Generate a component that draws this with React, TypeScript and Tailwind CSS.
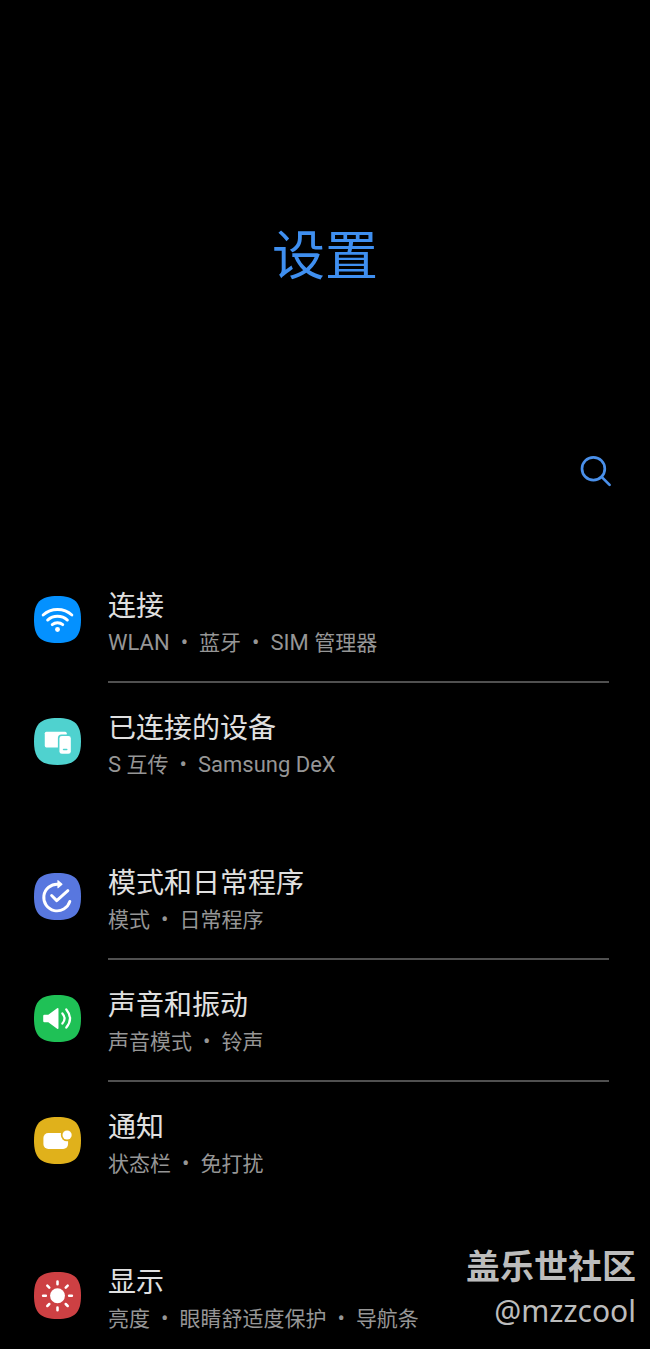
import React from 'react';

type SettingItem = {
   title: string;
   details: string[];
   color: string;
   icon: React.ReactNode;
};

const WifiIcon = (
   <>
      <g fill="none" stroke="#fff" strokeWidth="2.9" strokeLinecap="round">
         <path d="M9.3 19.4C17.4 11.9 30.6 11.9 38.7 19.4" />
         <path d="M13.9 24.6C19.6 19.4 28.4 19.4 34.1 24.6" />
         <path d="M18.6 29.3C21.6 26.7 26.4 26.7 29.4 29.3" />
      </g>
      <circle cx="24" cy="34.2" r="2.5" fill="#fff" />
   </>
);

const DevicesIcon = (
   <>
      <rect x="11" y="14" width="22.4" height="16" rx="1.6" fill="#fff" />
      <rect x="24.4" y="16.9" width="14.4" height="20.8" rx="3.6" fill="#4fd2cf" />
      <rect x="26" y="18.5" width="11.6" height="18" rx="2.4" fill="#fff" />
      <path d="M30.2 32.2h3.2" stroke="#4fd2cf" strokeWidth="1.6" strokeLinecap="round" />
   </>
);

const ModesIcon = (
   <>
      <g fill="none" stroke="#fff" strokeWidth="3" strokeLinecap="round" strokeLinejoin="round">
         <path d="M24.4 11.5A13.6 13.6 0 1 0 36.6 29" />
         <path d="M18 23L23.2 28.2L34.6 18" />
      </g>
      <path d="M23.900 7.900q0-1 .8-.5l4.200 3.500q.6.6 0 1.200l-4.200 3.400q-.8.5-.8-.5z" fill="#fff" />
   </>
);

const SoundIcon = (
   <>
      <path d="M10.6 20.2H14.6L23.6 13.6Q25 12.8 25 14.4V33.6Q25 35.2 23.6 34.4L14.6 27.8H10.6Q9.4 27.8 9.4 26.6V21.4Q9.4 20.2 10.6 20.2Z" fill="#fff" />
      <g fill="none" stroke="#fff" strokeWidth="2.3" strokeLinecap="round">
         <path d="M29 18.8Q33.4 24 29 29.2" />
         <path d="M33 14.8Q40.6 24 33 33.2" />
      </g>
   </>
);

const NotificationIcon = (
   <>
      <rect x="9.6" y="16.400" width="25.200" height="16.200" rx="5" fill="#fff" />
      <circle cx="33.800" cy="18.400" r="6.400" fill="#e0b11b" />
      <circle cx="33.800" cy="18.400" r="4.700" fill="#fff" />
   </>
);

const DisplayIcon = (
   <>
      <circle cx="24" cy="24.3" r="7.6" fill="#fff" />
      <path
         d="M24 9.6v2.8M24 36.2V39M9.3 24.3h2.8M35.9 24.3h2.8M13.6 13.9l2 2M32.4 32.7l2 2M13.6 34.7l2-2M32.4 15.9l2-2"
         stroke="#fff"
         strokeWidth="2.6"
         strokeLinecap="round"
      />
   </>
);

// 설정 그룹별 항목 목록
const groups: SettingItem[][] = [
   [
      { title: '连接', details: ['WLAN', '蓝牙', 'SIM 管理器'], color: '#0491ff', icon: WifiIcon },
      { title: '已连接的设备', details: ['S 互传', 'Samsung DeX'], color: '#4fd2cf', icon: DevicesIcon },
   ],
   [
      { title: '模式和日常程序', details: ['模式', '日常程序'], color: '#5877df', icon: ModesIcon },
      { title: '声音和振动', details: ['声音模式', '铃声'], color: '#1fc156', icon: SoundIcon },
      { title: '通知', details: ['状态栏', '免打扰'], color: '#e0b11b', icon: NotificationIcon },
   ],
   [{ title: '显示', details: ['亮度', '眼睛舒适度保护', '导航条'], color: '#cd4043', icon: DisplayIcon }],
];

// 라틴 문자는 한자보다 조금 크게 표시
const DetailText = ({ text }: { text: string }) => {
   const [, latin, rest] = text.match(/^([A-Za-z ]*)(.*)$/) ?? [];
   return (
      <>
         {latin && <span className="text-[22px]">{latin}</span>}
         {rest}
      </>
   );
};

const SettingRow = ({ title, details, color, icon }: SettingItem) => (
   <a href="#" className="flex items-start gap-[27px] pl-[34px] pr-[41px]">
      <svg viewBox="0 0 48 48" className="mt-[35px] size-[47px] shrink-0" aria-hidden="true">
         <path d="M24 0C41.5 0 48 6.5 48 24S41.5 48 24 48S0 41.5 0 24S6.5 0 24 0Z" fill={color} />
         {icon}
      </svg>
      <div className="flex-1 pt-7 pb-5 border-b-2 border-[#505050] in-[li:last-child]:border-b-0 in-[li:last-child]:pb-0">
         <div className="text-[28px] leading-9 text-[#e0e0e0]">{title}</div>
         <div className="text-[21px] leading-9 text-[#969696]">
            {details.map((detail, i) => (
               <React.Fragment key={detail}>
                  {i > 0 && <span className="px-[11px] text-[22px]">•</span>}
                  <DetailText text={detail} />
               </React.Fragment>
            ))}
         </div>
      </div>
   </a>
);

const App = () => {
   return (
      <main lang="zh-CN" className="relative min-h-screen bg-black font-['Roboto','Noto_Sans_CJK_SC',sans-serif]">
         <header className="flex flex-col pt-[217px] pb-[65px]">
            <h1 className="text-center text-[53px] leading-20 text-[#3f8ff0]">设置</h1>
            <button type="button" aria-label="搜索" className="mt-[151px] mr-[30px] size-12 self-end">
               <svg viewBox="0 0 48 48" fill="none" stroke="#4a90ea" strokeWidth="2.7" strokeLinecap="round">
                  <circle cx="21.4" cy="20.7" r="11.4" />
                  <path d="M29.6 28.9L37.6 36.9" />
               </svg>
            </button>
         </header>

         <div className="flex flex-col gap-[55px]">
            {groups.map(group => (
               <ul key={group[0].title}>
                  {group.map(item => (
                     <li key={item.title}>
                        <SettingRow {...item} />
                     </li>
                  ))}
               </ul>
            ))}
         </div>

         {/* 우측 하단 워터마크 */}
         <div className="absolute right-[14px] bottom-[18px] text-right text-[#bcbcbc] pointer-events-none">
            <div className="text-[34px] leading-12 font-bold">盖乐世社区</div>
            <div className="text-[30px] leading-10 font-['Noto_Sans',sans-serif]">@mzzcool</div>
         </div>
      </main>
   );
};

export default App;
